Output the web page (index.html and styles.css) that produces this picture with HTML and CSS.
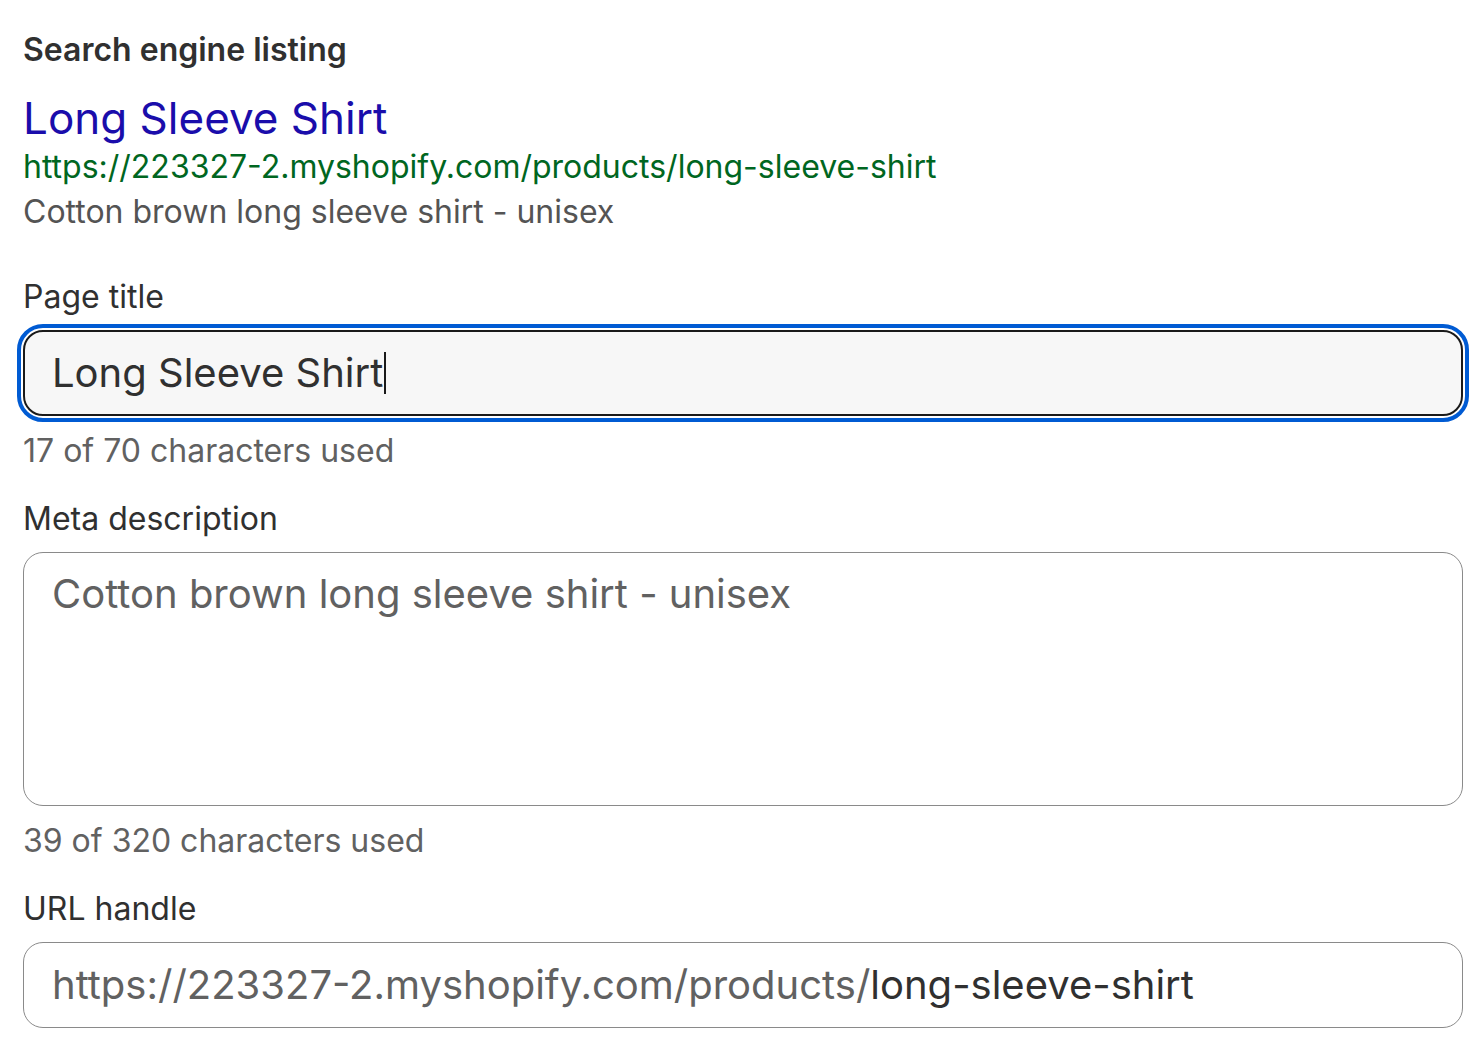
FILE: index.html
```html
<!DOCTYPE html>
<html>
<head>
<meta charset="utf-8">
<link rel="stylesheet" href="styles.css">
</head>
<body>
<div class="page">
  <h2 class="heading">Search engine listing</h2>
  <div class="preview">
    <div class="preview-title">Long Sleeve Shirt</div>
    <div class="preview-url">https://223327-2.myshopify.com/products/long-sleeve-shirt</div>
    <div class="preview-desc">Cotton brown long sleeve shirt - unisex</div>
  </div>

  <div class="field field-first">
    <div class="label">Page title</div>
    <div class="input input-focused"><span class="value">Long Sleeve Shirt</span><span class="caret"></span></div>
    <div class="help">17 of 70 characters used</div>
  </div>

  <div class="field">
    <div class="label">Meta description</div>
    <div class="input textarea"><span class="placeholder">Cotton brown long sleeve shirt - unisex</span></div>
    <div class="help">39 of 320 characters used</div>
  </div>

  <div class="field">
    <div class="label">URL handle</div>
    <div class="input"><span class="prefix">https://223327-2.myshopify.com/products/</span><span class="value">long-sleeve-shirt</span></div>
  </div>
</div>
</body>
</html>
```

FILE: styles.css
```css
* { box-sizing: border-box; }
html, body { margin: 0; padding: 0; background: #ffffff; }
body {
  font-family: Inter, "Noto Sans", "Liberation Sans", sans-serif;
  color: #303030;
}
.page {
  padding: 30px 21px 0 23px;
}
.heading {
  margin: 0;
  font-size: 32px;
  line-height: 40px;
  font-weight: 600;
  color: #303030;
}
.preview { margin-top: 22px; }
.preview-title {
  font-size: 44px;
  line-height: 52px;
  color: #1a0dab;
}
.preview-url {
  font-size: 32px;
  line-height: 44px;
  margin-top: 1px;
  color: #006621;
}
.preview-desc {
  font-size: 32px;
  line-height: 44px;
  margin-top: 1px;
  color: #545454;
}
.field { margin-top: 24px; }
.field-first { margin-top: 41px; }
.label {
  font-size: 32px;
  line-height: 44px;
  color: #303030;
  margin-bottom: 11px;
}
.help {
  font-size: 32px;
  line-height: 44px;
  color: #616161;
  margin-top: 13px;
}
.input {
  height: 86px;
  border: 1.5px solid #8a8a8a;
  border-radius: 20px;
  background: #ffffff;
  display: flex;
  align-items: center;
  padding: 0 27px 0 28px;
  font-size: 40px;
  line-height: 52px;
  color: #303030;
  white-space: nowrap;
}
.input-focused {
  border: 2px solid #1a1a1a;
  background: #f7f7f7;
  outline: 4px solid #005bd3;
  outline-offset: 2px;
  padding-left: 27px;
}
.caret {
  display: inline-block;
  width: 0;
  height: 42px;
  border-left: 2px solid #1a1a1a;
  margin-left: 1px;
}
.textarea {
  height: 254px;
  align-items: flex-start;
  padding-top: 15px;
}
.placeholder, .prefix { color: #616161; }
```
